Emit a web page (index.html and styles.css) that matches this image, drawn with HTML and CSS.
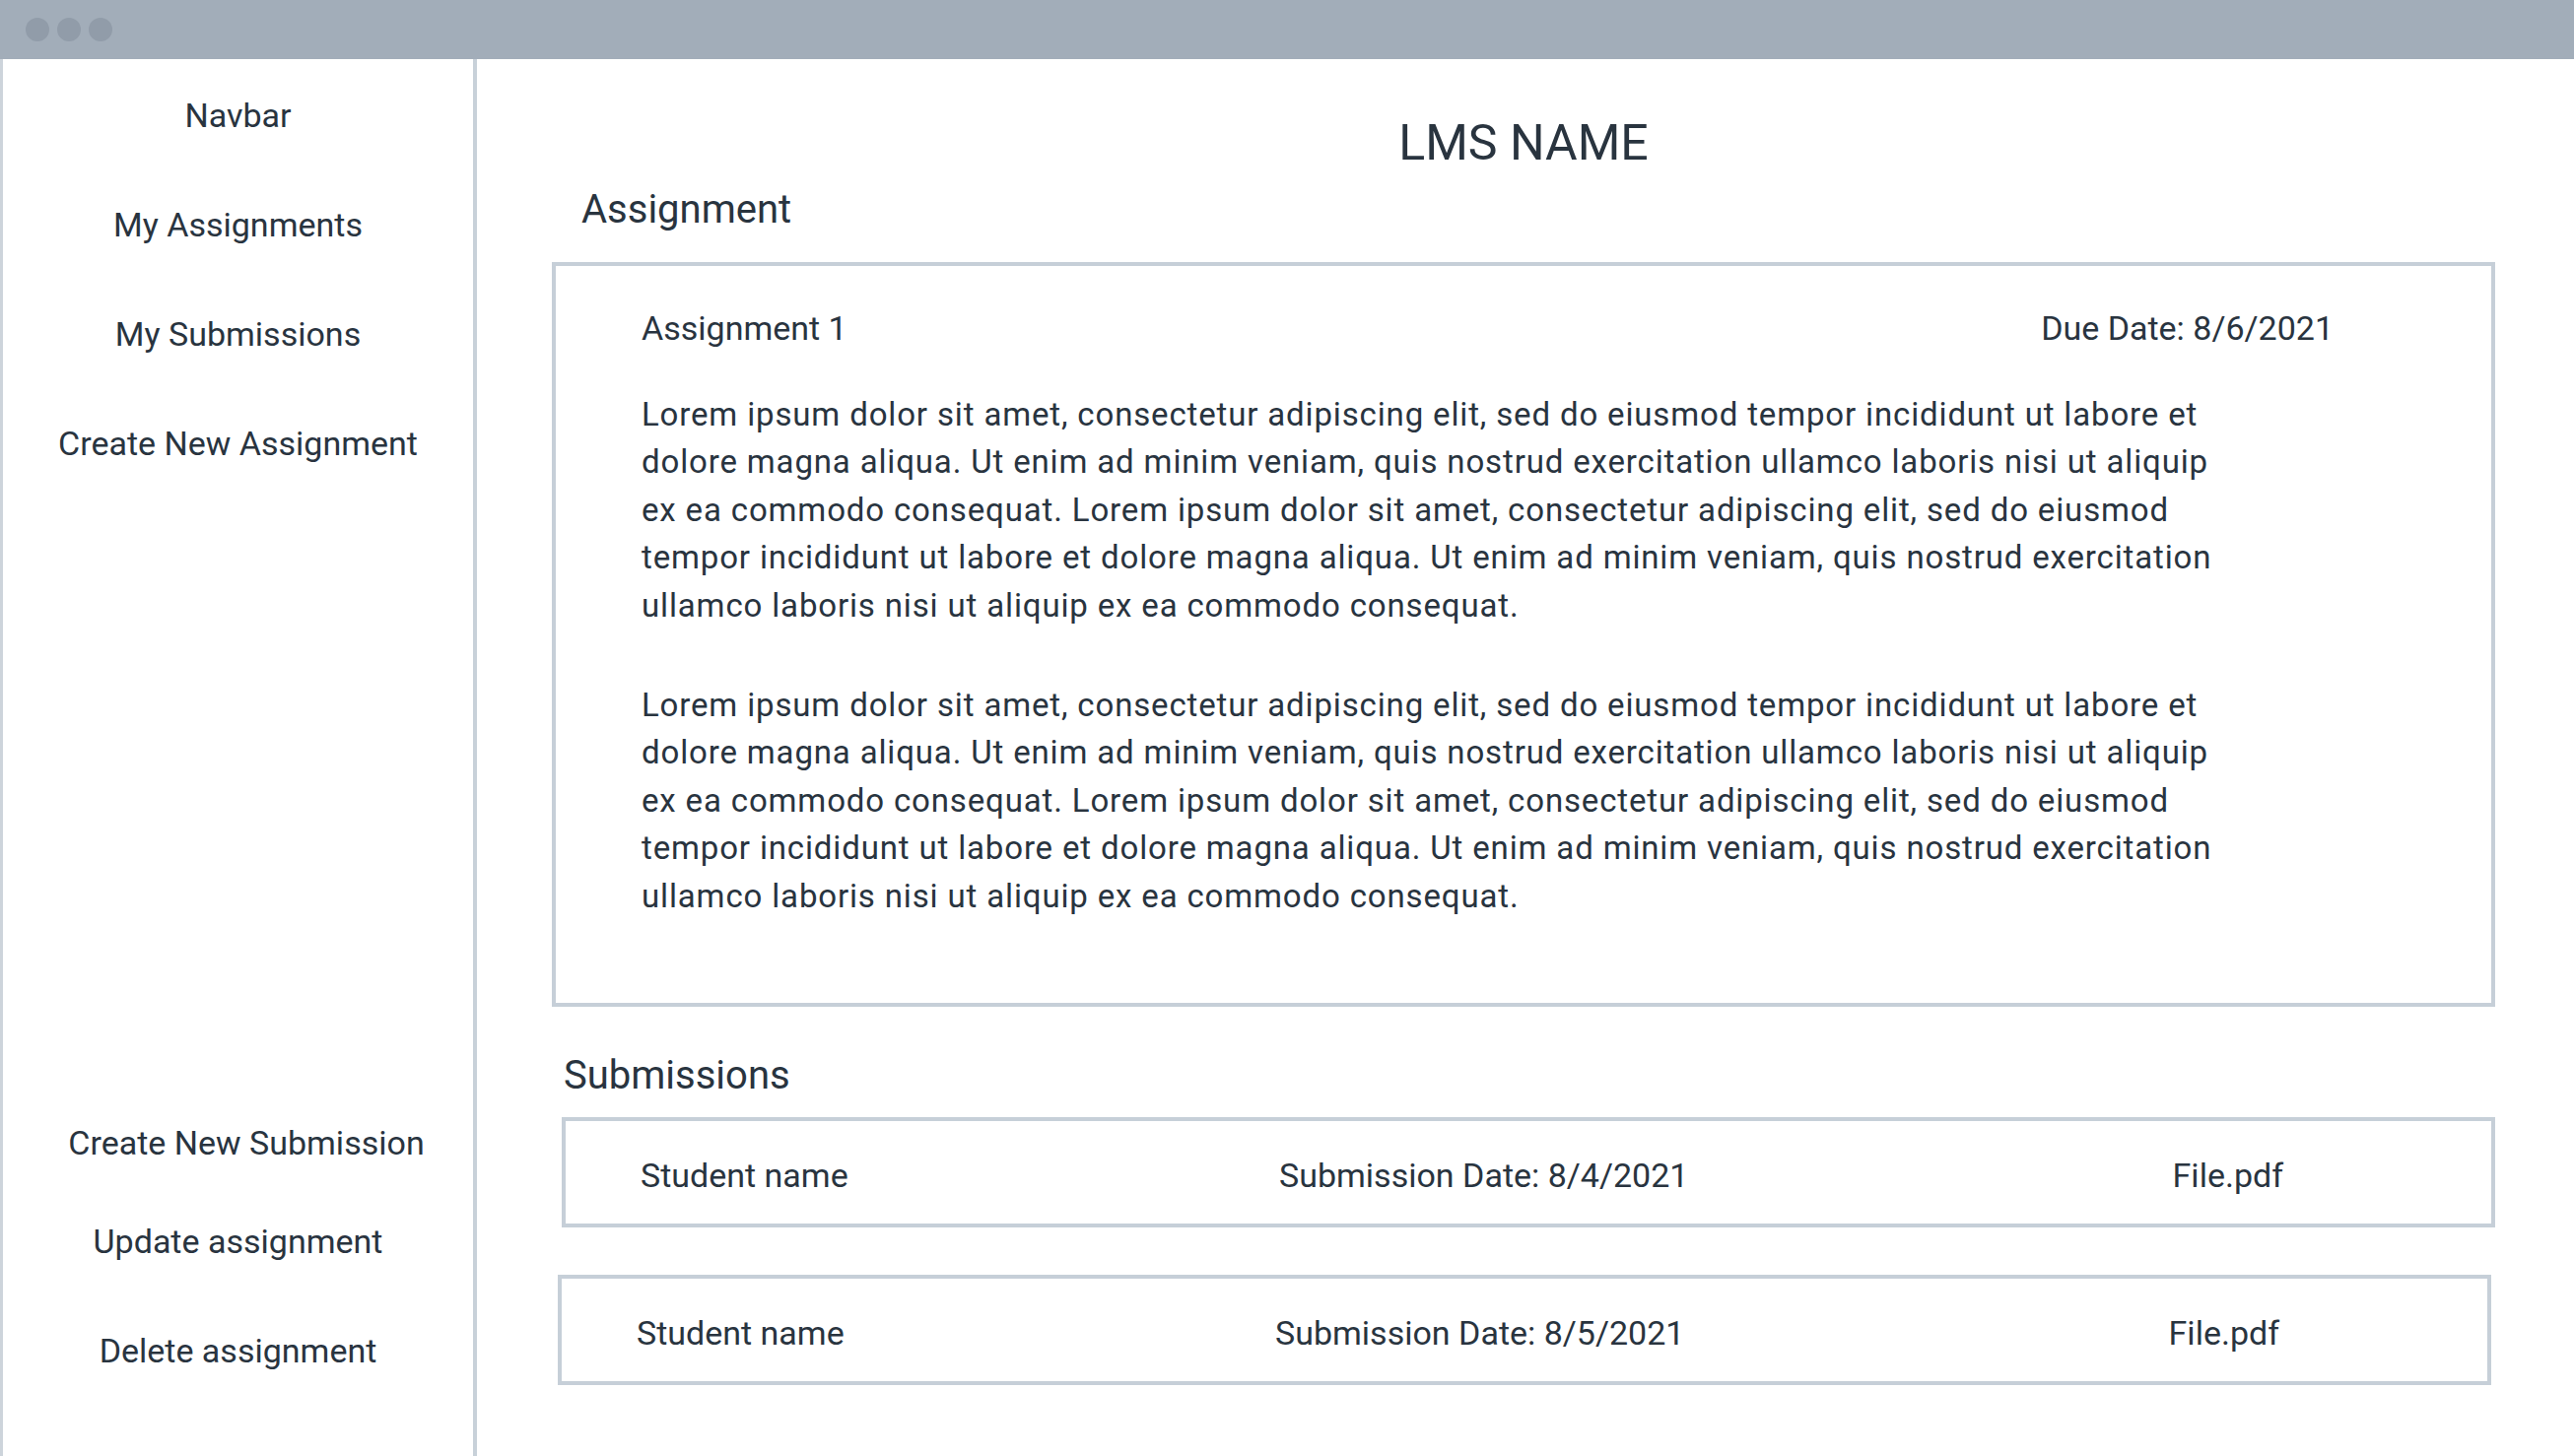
FILE: index.html
```html
<!DOCTYPE html>
<html lang="en">
<head>
<meta charset="utf-8">
<title>LMS NAME</title>
<link rel="stylesheet" href="styles.css">
</head>
<body>
<div class="window">
  <div class="titlebar">
    <span class="dot"></span>
    <span class="dot"></span>
    <span class="dot"></span>
  </div>
  <div class="frame">
    <nav class="sidebar">
      <div class="nav-top">
        <div class="nav-item">Navbar</div>
        <div class="nav-item">My Assignments</div>
        <div class="nav-item">My Submissions</div>
        <div class="nav-item">Create New Assignment</div>
      </div>
      <div class="nav-bottom">
        <div class="nav-item nav-item--shift">Create New Submission</div>
        <div class="nav-item nav-item--update">Update assignment</div>
        <div class="nav-item nav-item--delete">Delete assignment</div>
      </div>
    </nav>
    <main class="main">
      <h1 class="app-title">LMS NAME</h1>
      <h2 class="section-title section-title--assignment">Assignment</h2>
      <section class="card">
        <div class="card-head">
          <span>Assignment 1</span>
          <span>Due Date: 8/6/2021</span>
        </div>
        <p class="para">Lorem ipsum dolor sit amet, consectetur adipiscing elit, sed do eiusmod tempor incididunt ut labore et<br>dolore magna aliqua. Ut enim ad minim veniam, quis nostrud exercitation ullamco laboris nisi ut aliquip<br>ex ea commodo consequat. Lorem ipsum dolor sit amet, consectetur adipiscing elit, sed do eiusmod<br>tempor incididunt ut labore et dolore magna aliqua. Ut enim ad minim veniam, quis nostrud exercitation<br>ullamco laboris nisi ut aliquip ex ea commodo consequat.</p>
        <p class="para para--second">Lorem ipsum dolor sit amet, consectetur adipiscing elit, sed do eiusmod tempor incididunt ut labore et<br>dolore magna aliqua. Ut enim ad minim veniam, quis nostrud exercitation ullamco laboris nisi ut aliquip<br>ex ea commodo consequat. Lorem ipsum dolor sit amet, consectetur adipiscing elit, sed do eiusmod<br>tempor incididunt ut labore et dolore magna aliqua. Ut enim ad minim veniam, quis nostrud exercitation<br>ullamco laboris nisi ut aliquip ex ea commodo consequat.</p>
      </section>
      <h2 class="section-title section-title--subs">Submissions</h2>
      <div class="sub-row sub-row--first">
        <span>Student name</span>
        <span>Submission Date: 8/4/2021</span>
        <span>File.pdf</span>
      </div>
      <div class="sub-row sub-row--second">
        <span>Student name</span>
        <span>Submission Date: 8/5/2021</span>
        <span>File.pdf</span>
      </div>
    </main>
  </div>
</div>
</body>
</html>
```

FILE: styles.css
```css
* {
  box-sizing: border-box;
}

html, body {
  margin: 0;
  padding: 0;
  background: #ffffff;
}

body {
  width: 2612px;
  height: 1478px;
  overflow: hidden;
  font-family: Roboto, "Liberation Sans", sans-serif;
  color: #29343f;
}

.window {
  display: flex;
  flex-direction: column;
  height: 1478px;
}

.titlebar {
  height: 60px;
  flex: 0 0 60px;
  background: #a2adb9;
  display: flex;
  align-items: center;
  gap: 8px;
  padding-left: 26px;
}

.dot {
  width: 24px;
  height: 24px;
  border-radius: 50%;
  background: #919ca9;
}

.frame {
  flex: 1;
  display: flex;
  min-height: 0;
}

.sidebar {
  width: 484px;
  flex: 0 0 484px;
  border-left: 3px solid #cdd4db;
  border-right: 4px solid #c8d1d9;
  display: flex;
  flex-direction: column;
  justify-content: space-between;
  padding: 37px 0 87px;
}

.nav-top {
  display: flex;
  flex-direction: column;
  gap: 71px;
}

.nav-bottom {
  display: flex;
  flex-direction: column;
}

.nav-item {
  font-size: 34px;
  line-height: 40px;
  text-align: center;
  white-space: nowrap;
}

.nav-item--shift {
  padding-left: 17px;
}

.nav-item--update {
  margin-top: 60px;
}

.nav-item--delete {
  margin-top: 71px;
}

.main {
  flex: 1;
  display: flex;
  flex-direction: column;
  padding: 55px 80px 0 76px;
}

.app-title {
  margin: 0;
  font-size: 50px;
  line-height: 60px;
  font-weight: 400;
  text-align: center;
}

.section-title {
  margin: 0;
  font-size: 40px;
  line-height: 48px;
  font-weight: 400;
}

.section-title--assignment {
  margin-top: 14px;
  padding-left: 30px;
}

.section-title--subs {
  margin-top: 46px;
  padding-left: 12px;
}

.card {
  margin-top: 29px;
  border: 4px solid #c6cfd8;
  padding: 43px 160px 84px 87px;
}

.card-head {
  display: flex;
  justify-content: space-between;
  font-size: 34px;
  line-height: 40px;
}

.para {
  margin: 44px 0 0;
  font-size: 33px;
  line-height: 48.4px;
  letter-spacing: 0.85px;
  white-space: nowrap;
}

.para--second {
  margin-top: 53px;
}

.sub-row {
  display: grid;
  grid-template-columns: 648px 1fr auto;
  border: 4px solid #c6cfd8;
  padding: 35px 211px 29px 76px;
  font-size: 34px;
  line-height: 40px;
  white-space: nowrap;
}

.sub-row--first {
  margin: 18px 0 0 10px;
}

.sub-row--second {
  margin: 48px 4px 0 6px;
}
```
